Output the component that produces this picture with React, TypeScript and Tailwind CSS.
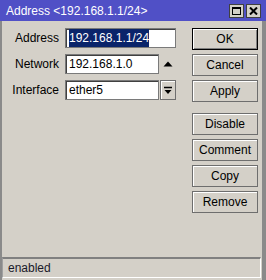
const font = { fontFamily: '"Liberation Sans", Arial, sans-serif' };

function Btn({ label, primary }: { label: string; primary?: boolean }) {
  return (
    <button
      className={`h-[22px] w-[66px] bg-[#d4d0c8] text-[12px] text-black ${
        primary ? 'border border-black shadow-[inset_1px_1px_0_#fff,inset_-1px_-1px_0_#808080]' : 'border border-[#6e6e6e] shadow-[inset_1px_1px_0_#fff]'
      }`}
    >
      {label}
    </button>
  );
}

function Field({ children, w }: { children: React.ReactNode; w: string }) {
  return (
    <div className={`h-[20px] ${w} bg-white border border-[#7a7a7a] shadow-[inset_1px_1px_0_#404040] flex items-center px-[3px] text-[12px] text-black`}>
      {children}
    </div>
  );
}

export default function App() {
  return (
    <div className="w-[266px] h-[280px] bg-[#d4d0c8] flex flex-col overflow-hidden" style={font}>
      <div className="h-[21px] bg-[#5050c6] flex items-center justify-between pl-[6px] pr-[5px] shrink-0">
        <span className="text-white text-[12px] leading-none">Address &lt;192.168.1.1/24&gt;</span>
        <div className="flex gap-[2px]">
          <div className="w-[15px] h-[14px] bg-[#d4d0c8] border border-[#404040] flex items-center justify-center">
            <div className="w-[9px] h-[8px] border border-black border-t-2" />
          </div>
          <div className="w-[15px] h-[14px] bg-[#d4d0c8] border border-[#404040] flex items-center justify-center">
            <svg width="9" height="8" viewBox="0 0 9 8">
              <path d="M1 0.5 L8 7.5 M8 0.5 L1 7.5" stroke="black" strokeWidth="2" />
            </svg>
          </div>
        </div>
      </div>
      <div className="flex-1 flex flex-col border-l-2 border-l-[#8a8a8a] border-r-[4px] border-r-[#8a8a8a]">
        <div className="flex-1 flex pt-[7px]">
          <div className="flex flex-col gap-[6px]">
            <div className="flex items-center gap-[6px]">
              <span className="w-[57px] text-right text-[12px] text-black">Address</span>
              <Field w="w-[111px]">
                <span className="bg-[#0a246a] text-white">192.168.1.1/24</span>
              </Field>
            </div>
            <div className="flex items-center gap-[6px]">
              <span className="w-[57px] text-right text-[12px] text-black">Network</span>
              <Field w="w-[94px]">192.168.1.0</Field>
              <svg width="10" height="8" viewBox="0 0 10 8" className="ml-[-2px]">
                <path d="M0.5 6.5 L5 1.5 L9.5 6.5 Z" fill="black" />
              </svg>
            </div>
            <div className="flex items-center gap-[6px]">
              <span className="w-[57px] text-right text-[12px] text-black whitespace-nowrap">Interface</span>
              <div className="flex gap-[1px]">
                <Field w="w-[94px]">ether5</Field>
                <div className="w-[16px] h-[20px] border border-[#6e6e6e] shadow-[inset_1px_1px_0_#fff] flex items-center justify-center">
                  <svg width="8" height="9" viewBox="0 0 8 9">
                    <path d="M0 1.5 H8" stroke="black" strokeWidth="1.5" />
                    <path d="M0.5 4 H7.5 L4 8 Z" fill="black" />
                  </svg>
                </div>
              </div>
            </div>
          </div>
          <div className="ml-auto mr-[4px] flex flex-col gap-[4px]">
            <Btn label="OK" primary />
            <Btn label="Cancel" />
            <Btn label="Apply" />
            <div className="mt-[7px] flex flex-col gap-[4px]">
              <Btn label="Disable" />
              <Btn label="Comment" />
              <Btn label="Copy" />
              <Btn label="Remove" />
            </div>
          </div>
        </div>
        <div className="h-[21px] mb-[2px] mr-[1px] border-t-2 border-t-[#808080] border-b border-b-white border-r border-r-white border-l border-l-[#a0a0a0] flex items-center pl-[5px] text-[12px] text-[#1a1a2a]">
          enabled
        </div>
      </div>
    </div>
  );
}
